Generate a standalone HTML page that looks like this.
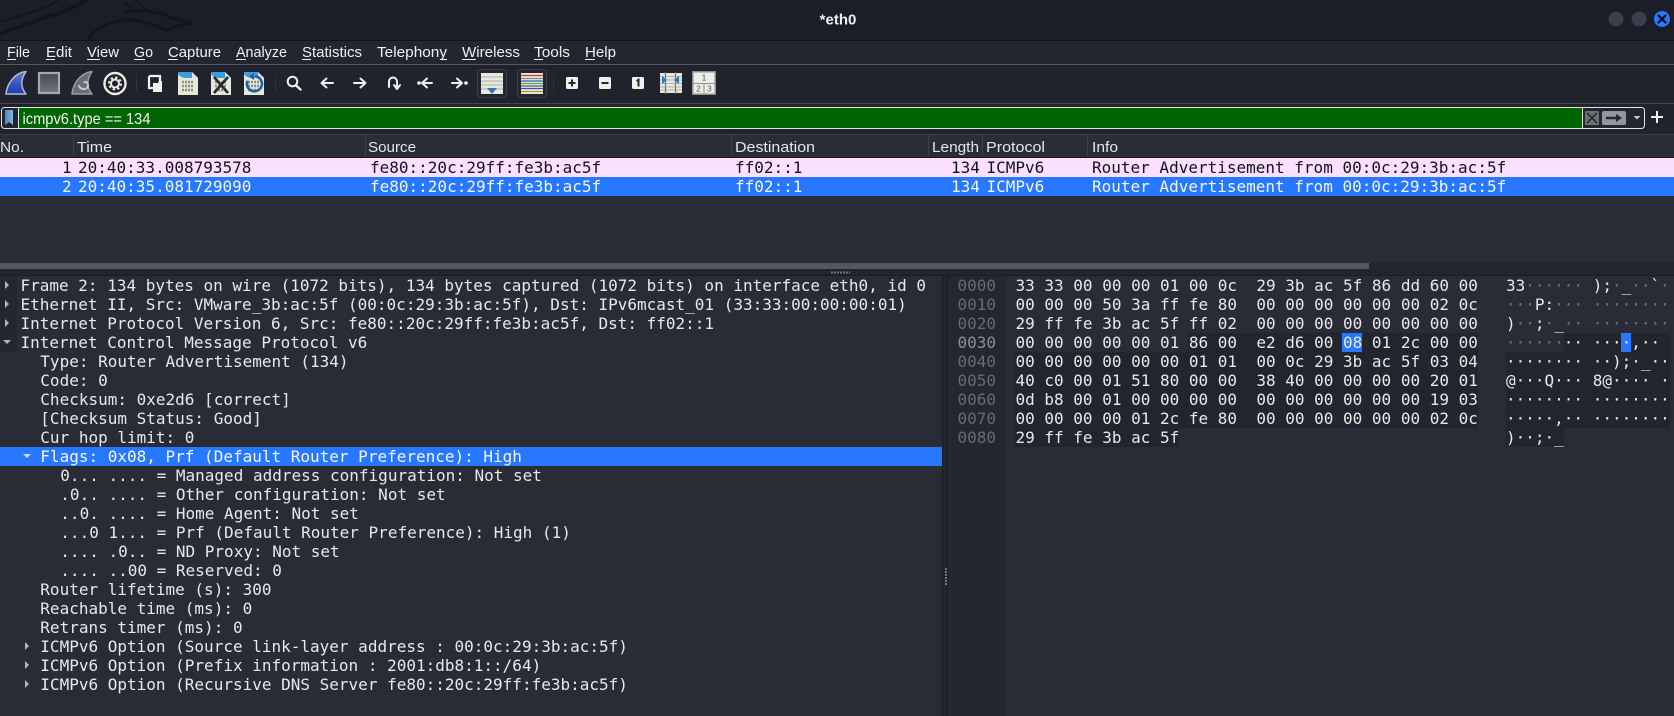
<!DOCTYPE html>
<html><head><meta charset="utf-8"><title>*eth0</title>
<style>
html,body{margin:0;padding:0;width:1674px;height:716px;overflow:hidden;background:#292c37}
.a{position:absolute}
#svg{position:absolute;left:0;top:0}
.m{font-family:"DejaVu Sans Mono",monospace;font-size:16px;line-height:19px;white-space:pre;color:#e8e8e8}
.dt{white-space:normal}
.row{position:absolute;left:0;width:1674px;height:19px}
.row span{position:absolute;top:0}
.r1{background:#fbe0fd;color:#12131c}
.r2{background:#2777ff;color:#f2f6ff}
.t{height:19px;position:relative}
.t i{position:absolute;width:0;height:0}
.rt{top:5px;border-left:4px solid #b4b6bb;border-top:4px solid transparent;border-bottom:4px solid transparent}
.dn{top:7px;border-top:4px solid #b4b6bb;border-left:4px solid transparent;border-right:4px solid transparent}
.t b{font-weight:normal;position:absolute;top:0;white-space:pre}
.d{color:#6f717a}
.hx{position:absolute;left:1015.5px;top:276px}
.as{position:absolute;left:1506px;top:276px}
.of{position:absolute;left:957.5px;top:276px;color:#686a72}
</style></head><body>
<!-- backgrounds -->
<div class="a" style="left:0;top:0;width:1674px;height:40px;background:#1b1e27"></div>
<div class="a" style="left:0;top:40px;width:1674px;height:1px;background:#12141a"></div>
<div class="a" style="left:0;top:41px;width:1674px;height:23px;background:#23262e"></div>
<div class="a" style="left:0;top:64px;width:1674px;height:1px;background:#565961"></div>
<div class="a" style="left:0;top:65px;width:1674px;height:38px;background:#20232b"></div>
<div class="a" style="left:0;top:103px;width:1674px;height:1px;background:#444750"></div>
<div class="a" style="left:0;top:104px;width:1674px;height:30px;background:#20232b"></div>
<div class="a" style="left:0;top:134px;width:1674px;height:1px;background:#3c3f48"></div>
<div class="a" style="left:0;top:135px;width:1674px;height:22px;background:#2a2d36"></div>
<div class="a" style="left:0;top:157px;width:1674px;height:1px;background:#14161c"></div>
<div class="a" style="left:0;top:158px;width:1674px;height:105px;background:#292c37"></div>
<div class="a" style="left:0;top:263px;width:1674px;height:6px;background:#23262e"></div>
<div class="a" style="left:0;top:263px;width:1369px;height:6px;background:#55575d"></div>
<div class="a" style="left:0;top:269px;width:1674px;height:7px;background:#22252d"></div>
<div class="a" style="left:0;top:275px;width:1674px;height:1px;background:#1a1c23"></div>
<div class="a" style="left:0;top:276px;width:942px;height:440px;background:#292c37"></div>
<div class="a" style="left:0;top:276px;width:17px;height:76px;background:#25272f"></div>
<div class="a" style="left:942px;top:276px;width:6px;height:440px;background:#22252c"></div>
<div class="a" style="left:942px;top:276px;width:1px;height:440px;background:#1a1c22"></div>
<div class="a" style="left:947px;top:276px;width:1px;height:440px;background:#1a1c22"></div>
<div class="a" style="left:948px;top:276px;width:58px;height:440px;background:#24272e"></div>
<div class="a" style="left:1006px;top:276px;width:668px;height:440px;background:#292c37"></div>
<!-- hex field highlights -->
<div class="a" style="left:1188px;top:333px;width:290px;height:19px;background:#22252d"></div>
<div class="a" style="left:1015px;top:352px;width:463px;height:76px;background:#22252d"></div>
<div class="a" style="left:1015px;top:428px;width:164px;height:19px;background:#22252d"></div>
<div class="a" style="left:1564px;top:333px;width:106px;height:19px;background:#22252d"></div>
<div class="a" style="left:1506px;top:352px;width:164px;height:76px;background:#22252d"></div>
<div class="a" style="left:1506px;top:428px;width:58px;height:19px;background:#22252d"></div>
<div class="a" style="left:1342px;top:333px;width:20px;height:19px;background:#2777ff"></div>
<div class="a" style="left:1621px;top:333px;width:10px;height:19px;background:#2777ff"></div>

<!-- chrome svg -->
<svg id="svg" width="1674" height="160" viewBox="0 0 1674 160" xmlns="http://www.w3.org/2000/svg" font-family="'Liberation Sans',sans-serif">
<defs>
<linearGradient id="fin" x1="0" y1="0" x2="0" y2="1"><stop offset="0" stop-color="#5f7fd8"/><stop offset="1" stop-color="#1c36b0"/></linearGradient>
<linearGradient id="sq" x1="0" y1="0" x2="0" y2="1"><stop offset="0" stop-color="#44474f"/><stop offset="1" stop-color="#74767e"/></linearGradient>
<linearGradient id="bm" x1="0" y1="0" x2="1" y2="0"><stop offset="0" stop-color="#4f86c0"/><stop offset="1" stop-color="#86b5e4"/></linearGradient>
<g id="file">
<path d="M0 0H14L20 6V23H0Z" fill="#e6e8d8"/>
<path d="M0 0H14L20 6H8C4 6 1 4 0 2Z" fill="#3f9be0"/>
<path d="M14 0L20 6H14Z" fill="#d8e8f4"/>
<path d="M4 10H16M4 14H16M4 18H16" stroke="#8d8f82" stroke-width="2.4" stroke-dasharray="2 1" fill="none"/>
</g>
</defs>
<!-- dragon watermark -->
<g fill="none" stroke="#14161d" stroke-linecap="round">
<path d="M86 0C70 12 40 18 0 34" stroke-width="4"/>
<path d="M58 0C44 10 22 15 0 22" stroke-width="2"/>
<path d="M125 12C140 8 160 12 172 18L192 23L178 26L166 30C155 24 140 20 125 20C105 22 92 32 88 40" stroke-width="3"/>
<path d="M124 2L134 10M136 1L146 9" stroke-width="2"/>
</g>
<!-- title -->
<text x="838" y="24.500" fill="#eceef2" font-size="15" font-weight="bold" text-anchor="middle">*eth0</text>
<circle cx="1616" cy="19" r="7.500" fill="#3b3e4c"/><circle cx="1639" cy="19" r="7.500" fill="#3b3e4c"/>
<circle cx="1662" cy="19" r="8" fill="#2777ff"/>
<path d="M1658.500 15.500L1665.500 22.500M1665.500 15.500L1658.500 22.500" stroke="#0d0f15" stroke-width="2.200" stroke-linecap="round"/>
<!-- menu -->
<g fill="#eef0f3" font-size="15">
<text x="7" y="57" textLength="23" lengthAdjust="spacingAndGlyphs">File</text>
<text x="46" y="57" textLength="26" lengthAdjust="spacingAndGlyphs">Edit</text>
<text x="87" y="57" textLength="32" lengthAdjust="spacingAndGlyphs">View</text>
<text x="134" y="57" textLength="19" lengthAdjust="spacingAndGlyphs">Go</text>
<text x="168" y="57" textLength="53" lengthAdjust="spacingAndGlyphs">Capture</text>
<text x="236" y="57" textLength="51" lengthAdjust="spacingAndGlyphs">Analyze</text>
<text x="302" y="57" textLength="60" lengthAdjust="spacingAndGlyphs">Statistics</text>
<text x="377" y="57" textLength="70" lengthAdjust="spacingAndGlyphs">Telephony</text>
<text x="462" y="57" textLength="58" lengthAdjust="spacingAndGlyphs">Wireless</text>
<text x="534" y="57" textLength="36" lengthAdjust="spacingAndGlyphs">Tools</text>
<text x="585" y="57" textLength="31" lengthAdjust="spacingAndGlyphs">Help</text>
</g>
<g fill="#eef0f3">
<rect x="7" y="59" width="9" height="1"/><rect x="46" y="59" width="9" height="1"/><rect x="87" y="59" width="13" height="1"/><rect x="134" y="59" width="11" height="1"/><rect x="168" y="59" width="10" height="1"/><rect x="236" y="59" width="10" height="1"/><rect x="302" y="59" width="9" height="1"/><rect x="440" y="59" width="7" height="1"/><rect x="462" y="59" width="14" height="1"/><rect x="534" y="59" width="9" height="1"/><rect x="585" y="59" width="10" height="1"/>
</g>
<!-- toolbar: capture -->
<path d="M6 94C7 84 14 73 26 71.500C21 79 20 87 26 94Z" fill="url(#fin)" stroke="#b8bcc6" stroke-width="1.500" stroke-linejoin="round"/>
<rect x="39" y="73" width="20" height="20" fill="url(#sq)" stroke="#a4a8b2" stroke-width="2.200"/>
<path d="M72 94C73 84 80 73 92 71.500C87 79 86 87 92 94Z" fill="#6a6c74" stroke="#989ba3" stroke-width="1.500" stroke-linejoin="round"/>
<path d="M79 85C79 90 88 91 88 85C88 82 85 81 84 83" fill="none" stroke="#c4c6cc" stroke-width="2"/>
<circle cx="115" cy="83.500" r="10.500" fill="#20232b" stroke="#eceee8" stroke-width="2.400"/>
<circle cx="115" cy="83.500" r="4" fill="none" stroke="#eceee8" stroke-width="2"/>
<circle cx="115" cy="83.500" r="6" fill="none" stroke="#eceee8" stroke-width="2" stroke-dasharray="2.400 2.300"/>
<rect x="136" y="74" width="1" height="19" fill="#2e3139"/>
<!-- open -->
<path d="M149 76H160V82M149 76V88H153" fill="none" stroke="#f2f2ee" stroke-width="2.200"/>
<path d="M153 83H158L159 81H162V92H153Z" fill="#f2f2ee"/>
<use href="#file" x="178" y="72"/>
<use href="#file" x="211" y="72"/>
<path d="M214 77L228 93M228 77L214 93" stroke="#2a2d33" stroke-width="2.800"/>
<use href="#file" x="244" y="72"/>
<path d="M259 78A7.500 7.500 0 1 1 250 78" fill="none" stroke="#245ea8" stroke-width="2.600" transform="rotate(-30 254 84)"/>
<path d="M254 73L249 76.500L254 80Z" fill="#245ea8"/>
<rect x="275" y="74" width="1" height="19" fill="#2e3139"/>
<!-- nav -->
<g fill="none" stroke="#eef0f0" stroke-width="2" stroke-linecap="round" stroke-linejoin="round">
<circle cx="292.500" cy="81.500" r="4.800"/><path d="M296 85.500L300.500 89.500" stroke-width="2.400"/>
<path d="M333 83H322M326.500 78.500L321.500 83L326.500 87.500"/>
<path d="M354 83H365M360.500 78.500L365.500 83L360.500 87.500"/>
<path d="M389 87V81.500A4 4 0 0 1 397 81.500V86M394 85L397 89L400 85" />
<path d="M432 83H423M427 78.500L422 83L427 87.500"/>
<path d="M452 83H461M457 78.500L462 83L457 87.500"/>
</g>
<circle cx="419" cy="83" r="1.800" fill="#eef0f0"/><circle cx="466" cy="83" r="1.800" fill="#eef0f0"/>
<!-- colorize boxes -->
<rect x="477.500" y="69.500" width="29" height="28" rx="3" fill="#23262e" stroke="#3a3d47"/>
<rect x="481" y="73" width="22" height="21" fill="#e6e7dd"/>
<path d="M481 77H503M481 81H503M481 85H503M481 89H503" stroke="#b0b1a6" stroke-width="1"/>
<path d="M487 88H497L492 94Z" fill="#3d6fb5"/>
<rect x="517.500" y="69.500" width="29" height="28" rx="3" fill="#23262e" stroke="#3a3d47"/>
<rect x="521" y="73" width="22" height="21" fill="#e6e7dd"/>
<g stroke-width="1.300"><path d="M521 75.500H543" stroke="#d43a2a"/><path d="M521 78.500H543" stroke="#888"/><path d="M521 81H543" stroke="#2a5fd0"/><path d="M521 83.500H543" stroke="#6aab2a"/><path d="M521 86H543" stroke="#555a80"/><path d="M521 88.500H543" stroke="#3a4bd0"/><path d="M521 91.500H543" stroke="#cc9a10"/></g>
<rect x="553" y="74" width="1" height="19" fill="#2e3139"/>
<!-- zoom -->
<rect x="566" y="77" width="12" height="12" rx="1.500" fill="#f0f0ec"/><path d="M568.500 83H575.500M572 79.500V86.500" stroke="#26282e" stroke-width="2"/>
<rect x="599" y="77" width="12" height="12" rx="1.500" fill="#f0f0ec"/><path d="M601.500 83H608.500" stroke="#26282e" stroke-width="2"/>
<rect x="632" y="77" width="12" height="12" rx="1.500" fill="#f0f0ec"/><path d="M636.500 81L638.500 79.800V86.500" stroke="#26282e" stroke-width="2" fill="none"/>
<!-- resize columns -->
<rect x="660" y="73" width="22" height="20" fill="#e6e7dd"/>
<path d="M660 76.500H682M660 80H682M660 83.500H682M660 87H682M660 90H682" stroke="#b4b5aa"/>
<path d="M665.500 72V94M675.500 72V94" stroke="#777" stroke-width="1.200"/>
<path d="M662 76V84L667 80ZM679 76V84L674 80Z" fill="#2f78c4"/>
<!-- layout -->
<rect x="692" y="71" width="24" height="24" fill="#8c8e90"/>
<rect x="693.500" y="72.500" width="21" height="10.500" fill="#ecede6"/>
<rect x="693.500" y="84" width="10" height="9.500" fill="#ecede6"/><rect x="704.500" y="84" width="10" height="9.500" fill="#ecede6"/>
<g font-size="8" fill="#55575a" text-anchor="middle"><text x="704" y="80.500">1</text><text x="698.500" y="91.500">2</text><text x="709.500" y="91.500">3</text></g>
<!-- filter bar -->
<rect x="1.500" y="107.500" width="1643" height="21" rx="3" fill="#23262e" stroke="#e2e4de"/>
<rect x="19" y="108" width="1563" height="20" fill="#006400"/>
<rect x="18" y="108" width="1" height="20" fill="#e2e4de"/><rect x="1582" y="108" width="1" height="20" fill="#e2e4de"/>
<path d="M5 110H13V125L9 122L5 125Z" fill="url(#bm)"/>
<text x="22.500" y="124" fill="#f4f6f2" font-size="16" textLength="128" lengthAdjust="spacingAndGlyphs">icmpv6.type == 134</text>
<rect x="1585" y="111" width="14" height="14" rx="1" fill="#6d6f73"/>
<path d="M1587 113L1597 123M1597 113L1587 123" stroke="#1f2126" stroke-width="1.400"/>
<rect x="1602" y="111" width="24" height="14" rx="2" fill="#94969f"/>
<path d="M1606 116.700H1616V114L1622 118L1616 122V119.300H1606Z" fill="#25272d"/>
<path d="M1633.500 116H1640.500L1637 119.500Z" fill="#c4c6ca"/>
<path d="M1657 111V123M1651 117H1663" stroke="#f0f0f0" stroke-width="2"/>
<!-- column separators -->
<g fill="#3c3f48"><rect x="73" y="135" width="1" height="22"/><rect x="365" y="135" width="1" height="22"/><rect x="731" y="135" width="1" height="22"/><rect x="928" y="135" width="1" height="22"/><rect x="982" y="135" width="1" height="22"/><rect x="1087" y="135" width="1" height="22"/></g>
<g fill="#e4e6ea" font-size="15">
<text x="0" y="152" textLength="24" lengthAdjust="spacingAndGlyphs">No.</text>
<text x="77" y="152" textLength="35" lengthAdjust="spacingAndGlyphs">Time</text>
<text x="368" y="152" textLength="48" lengthAdjust="spacingAndGlyphs">Source</text>
<text x="735" y="152" textLength="80" lengthAdjust="spacingAndGlyphs">Destination</text>
<text x="932" y="152" textLength="47" lengthAdjust="spacingAndGlyphs">Length</text>
<text x="986" y="152" textLength="59" lengthAdjust="spacingAndGlyphs">Protocol</text>
<text x="1092" y="152" textLength="26" lengthAdjust="spacingAndGlyphs">Info</text>
</g>
</svg>

<!-- packet list -->
<div class="row r1 m" style="top:158px"><span style="left:62px">1</span><span style="left:78px">20:40:33.008793578</span><span style="left:370px">fe80::20c:29ff:fe3b:ac5f</span><span style="left:735px">ff02::1</span><span style="left:951px">134</span><span style="left:986.5px">ICMPv6</span><span style="left:1092px">Router Advertisement from 00:0c:29:3b:ac:5f</span></div>
<div class="row r2 m" style="top:177px"><span style="left:62px">2</span><span style="left:78px">20:40:35.081729090</span><span style="left:370px">fe80::20c:29ff:fe3b:ac5f</span><span style="left:735px">ff02::1</span><span style="left:951px">134</span><span style="left:986.5px">ICMPv6</span><span style="left:1092px">Router Advertisement from 00:0c:29:3b:ac:5f</span></div>

<!-- splitter dots -->
<svg class="a" style="left:0;top:270px" width="1674" height="6"><path d="M831 2.500H850" stroke="#72747c" stroke-width="2" stroke-dasharray="2 1"/></svg>
<svg class="a" style="left:944px;top:566px" width="4" height="22"><path d="M2 2V20" stroke="#72747c" stroke-width="2" stroke-dasharray="2 1"/></svg>

<!-- details -->
<div class="a m dt" style="left:0;top:276px;width:942px">
<div class="t"><i class="rt" style="left:5px"></i><b style="left:20.5px">Frame 2: 134 bytes on wire (1072 bits), 134 bytes captured (1072 bits) on interface eth0, id 0</b></div>
<div class="t"><i class="rt" style="left:5px"></i><b style="left:20.5px">Ethernet II, Src: VMware_3b:ac:5f (00:0c:29:3b:ac:5f), Dst: IPv6mcast_01 (33:33:00:00:00:01)</b></div>
<div class="t"><i class="rt" style="left:5px"></i><b style="left:20.5px">Internet Protocol Version 6, Src: fe80::20c:29ff:fe3b:ac5f, Dst: ff02::1</b></div>
<div class="t"><i class="dn" style="left:3px"></i><b style="left:20.5px">Internet Control Message Protocol v6</b></div>
<div class="t"><b style="left:40.3px">Type: Router Advertisement (134)</b></div>
<div class="t"><b style="left:40.3px">Code: 0</b></div>
<div class="t"><b style="left:40.3px">Checksum: 0xe2d6 [correct]</b></div>
<div class="t"><b style="left:40.3px">[Checksum Status: Good]</b></div>
<div class="t"><b style="left:40.3px">Cur hop limit: 0</b></div>
<div class="t" style="background:#2777ff;color:#f2f6ff"><i class="dn" style="left:23px;border-top-color:#cfe0ff"></i><b style="left:40.3px">Flags: 0x08, Prf (Default Router Preference): High</b></div>
<div class="t"><b style="left:60.3px">0... .... = Managed address configuration: Not set</b></div>
<div class="t"><b style="left:60.3px">.0.. .... = Other configuration: Not set</b></div>
<div class="t"><b style="left:60.3px">..0. .... = Home Agent: Not set</b></div>
<div class="t"><b style="left:60.3px">...0 1... = Prf (Default Router Preference): High (1)</b></div>
<div class="t"><b style="left:60.3px">.... .0.. = ND Proxy: Not set</b></div>
<div class="t"><b style="left:60.3px">.... ..00 = Reserved: 0</b></div>
<div class="t"><b style="left:40.3px">Router lifetime (s): 300</b></div>
<div class="t"><b style="left:40.3px">Reachable time (ms): 0</b></div>
<div class="t"><b style="left:40.3px">Retrans timer (ms): 0</b></div>
<div class="t"><i class="rt" style="left:25px"></i><b style="left:40.3px">ICMPv6 Option (Source link-layer address : 00:0c:29:3b:ac:5f)</b></div>
<div class="t"><i class="rt" style="left:25px"></i><b style="left:40.3px">ICMPv6 Option (Prefix information : 2001:db8:1::/64)</b></div>
<div class="t"><i class="rt" style="left:25px"></i><b style="left:40.3px">ICMPv6 Option (Recursive DNS Server fe80::20c:29ff:fe3b:ac5f)</b></div>
</div>

<!-- hex -->
<div class="of m">0000
0010
0020
<span style="color:#8e9098">0030</span>
0040
0050
0060
0070
0080</div>
<div class="hx m">33 33 00 00 00 01 00 0c  29 3b ac 5f 86 dd 60 00
00 00 00 50 3a ff fe 80  00 00 00 00 00 00 02 0c
29 ff fe 3b ac 5f ff 02  00 00 00 00 00 00 00 00
00 00 00 00 00 01 86 00  e2 d6 00 08 01 2c 00 00
00 00 00 00 00 00 01 01  00 0c 29 3b ac 5f 03 04
40 c0 00 01 51 80 00 00  38 40 00 00 00 00 20 01
0d b8 00 01 00 00 00 00  00 00 00 00 00 00 19 03
00 00 00 00 01 2c fe 80  00 00 00 00 00 00 02 0c
29 ff fe 3b ac 5f</div>
<div class="as m">33<span class="d">······</span> );<span class="d">·</span>_<span class="d">··</span>`<span class="d">·</span>
<span class="d">···</span>P:<span class="d">···</span> <span class="d">········</span>
)<span class="d">··</span>;<span class="d">·</span>_<span class="d">··</span> <span class="d">········</span>
<span class="d">······</span>·· ····,··
········ ··);·_··
@···Q··· 8@···· ·
········ ········
·····,·· ········
)··;·_</div>
</body></html>
